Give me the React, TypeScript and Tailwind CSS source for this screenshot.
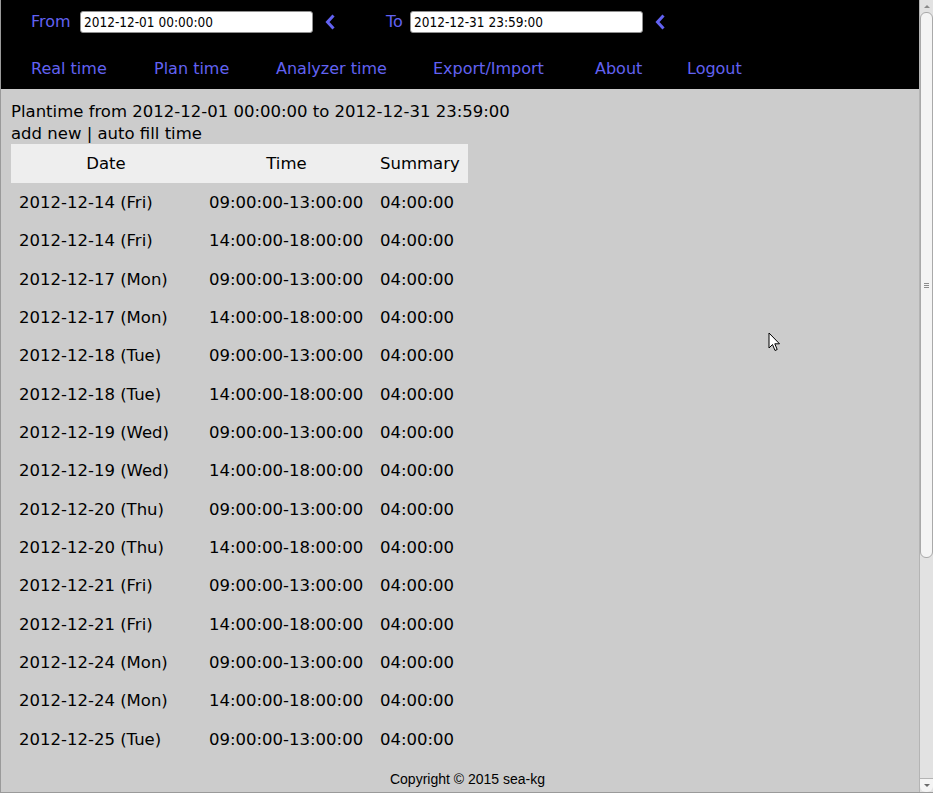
const ROWS: [string, string][] = [
  ["2012-12-14 (Fri)", "09:00:00-13:00:00"],
  ["2012-12-14 (Fri)", "14:00:00-18:00:00"],
  ["2012-12-17 (Mon)", "09:00:00-13:00:00"],
  ["2012-12-17 (Mon)", "14:00:00-18:00:00"],
  ["2012-12-18 (Tue)", "09:00:00-13:00:00"],
  ["2012-12-18 (Tue)", "14:00:00-18:00:00"],
  ["2012-12-19 (Wed)", "09:00:00-13:00:00"],
  ["2012-12-19 (Wed)", "14:00:00-18:00:00"],
  ["2012-12-20 (Thu)", "09:00:00-13:00:00"],
  ["2012-12-20 (Thu)", "14:00:00-18:00:00"],
  ["2012-12-21 (Fri)", "09:00:00-13:00:00"],
  ["2012-12-21 (Fri)", "14:00:00-18:00:00"],
  ["2012-12-24 (Mon)", "09:00:00-13:00:00"],
  ["2012-12-24 (Mon)", "14:00:00-18:00:00"],
  ["2012-12-25 (Tue)", "09:00:00-13:00:00"],
];

// fixed slot widths so each link starts where the original menu puts it
const NAV: { label: string; width: string }[] = [
  { label: "Real time", width: "w-[123px]" },
  { label: "Plan time", width: "w-[122px]" },
  { label: "Analyzer time", width: "w-[157px]" },
  { label: "Export/Import", width: "w-[162px]" },
  { label: "About", width: "w-[92px]" },
  { label: "Logout", width: "w-auto" },
];

function DateInput({ value }: { value: string }) {
  return (
    <div className="flex h-[22px] w-[233px] items-center rounded-[3px] border border-[#8f8f8f] bg-white pl-[3px] font-['DejaVu_Sans_Condensed','Liberation_Sans',sans-serif] text-[13.5px] text-black">
      {value}
    </div>
  );
}

function Back() {
  return (
    <svg className="ml-[12px] shrink-0" width="10" height="16" viewBox="0 0 10 16">
      <path
        d="M8.5 1.5 L2.5 8 L8.5 14.5"
        fill="none"
        stroke="#6262f2"
        strokeWidth="3"
        strokeLinejoin="miter"
      />
    </svg>
  );
}

function Scrollbar() {
  return (
    <div className="flex h-full w-[14px] flex-col border-l border-[#b4b4b4] bg-[#e2e2e2]">
      <div className="flex h-[12px] items-center justify-center">
        <div className="h-0 w-0 border-x-[3px] border-b-[3px] border-x-transparent border-b-[#8a8a8a]" />
      </div>
      <div className="flex h-[546px] items-center justify-center rounded-[6px] border border-[#a9a9a9] bg-[#f4f4f4]">
        <div className="flex flex-col gap-[1px]">
          <div className="h-px w-[5px] bg-[#8c8c8c]" />
          <div className="h-px w-[5px] bg-[#8c8c8c]" />
          <div className="h-px w-[5px] bg-[#8c8c8c]" />
        </div>
      </div>
      <div className="flex-1" />
      <div className="flex h-[14px] items-center justify-center rounded-b-[6px] border-t border-[#b4b4b4] bg-[#f4f4f4]">
        <div className="h-0 w-0 border-x-[3px] border-t-[3px] border-x-transparent border-t-[#6a6a6a]" />
      </div>
    </div>
  );
}

export default function App() {
  return (
    <div className="relative flex h-[793px] w-[933px] overflow-hidden border-b border-l border-[#9a9a9a] bg-[#cccccc] font-['DejaVu_Sans',sans-serif] text-black">
      <div className="flex min-w-0 flex-1 flex-col">
        <header className="h-[89px] shrink-0 bg-black pl-[30px] pt-[11px] text-[16px] text-[#6262f2]">
          <div className="flex h-[22px] items-center">
            <span className="w-[49px] leading-[22px]">From</span>
            <DateInput value="2012-12-01 00:00:00" />
            <Back />
            <span className="ml-[51px] w-[24px] leading-[22px]">To</span>
            <DateInput value="2012-12-31 23:59:00" />
            <Back />
          </div>
          <nav className="mt-[26px] flex h-[20px] items-center leading-[20px]">
            {NAV.map((item) => (
              <span key={item.label} className={`${item.width} shrink-0`}>
                {item.label}
              </span>
            ))}
          </nav>
        </header>

        <main className="min-h-0 flex-1 overflow-hidden pl-[10px] pt-[11px] text-[16.5px]">
          <div className="h-[44px] pt-[1px]">
            <div className="leading-[22px]">
              Plantime from 2012-12-01 00:00:00 to 2012-12-31 23:59:00
            </div>
            <div className="leading-[22px]">add new | auto fill time</div>
          </div>
          <table className="border-collapse">
            <thead>
              <tr className="h-[39px] bg-[#eeeeee]">
                <th className="w-[190px] px-[8px] pt-[2px] text-center font-normal">Date</th>
                <th className="w-[171px] px-[8px] pt-[2px] text-center font-normal">Time</th>
                <th className="w-[95px] px-[8px] pt-[2px] text-center font-normal">Summary</th>
              </tr>
            </thead>
            <tbody>
              {ROWS.map(([date, time], i) => (
                <tr key={i} className="h-[38.36px]">
                  <td className="px-[8px] pt-[2px] whitespace-nowrap">{date}</td>
                  <td className="px-[8px] pt-[2px] whitespace-nowrap">{time}</td>
                  <td className="px-[8px] pt-[2px] whitespace-nowrap">04:00:00</td>
                </tr>
              ))}
            </tbody>
          </table>
        </main>

        <footer className="flex h-[30px] shrink-0 items-center justify-center bg-[#cccccc] pl-[15px] pt-[4px] font-['Liberation_Sans',sans-serif] text-[14px]">
          Copyright © 2015 sea-kg
        </footer>
      </div>

      <Scrollbar />

      <svg
        className="absolute left-[767px] top-[332px]"
        width="14"
        height="21"
        viewBox="0 0 14 21"
      >
        <path
          d="M1 1 L1 16 L4.5 12.5 L7 18.5 L9.2 17.5 L6.8 11.8 L11.5 11.8 Z"
          fill="white"
          stroke="black"
          strokeWidth="1"
          strokeLinejoin="miter"
        />
      </svg>
    </div>
  );
}
